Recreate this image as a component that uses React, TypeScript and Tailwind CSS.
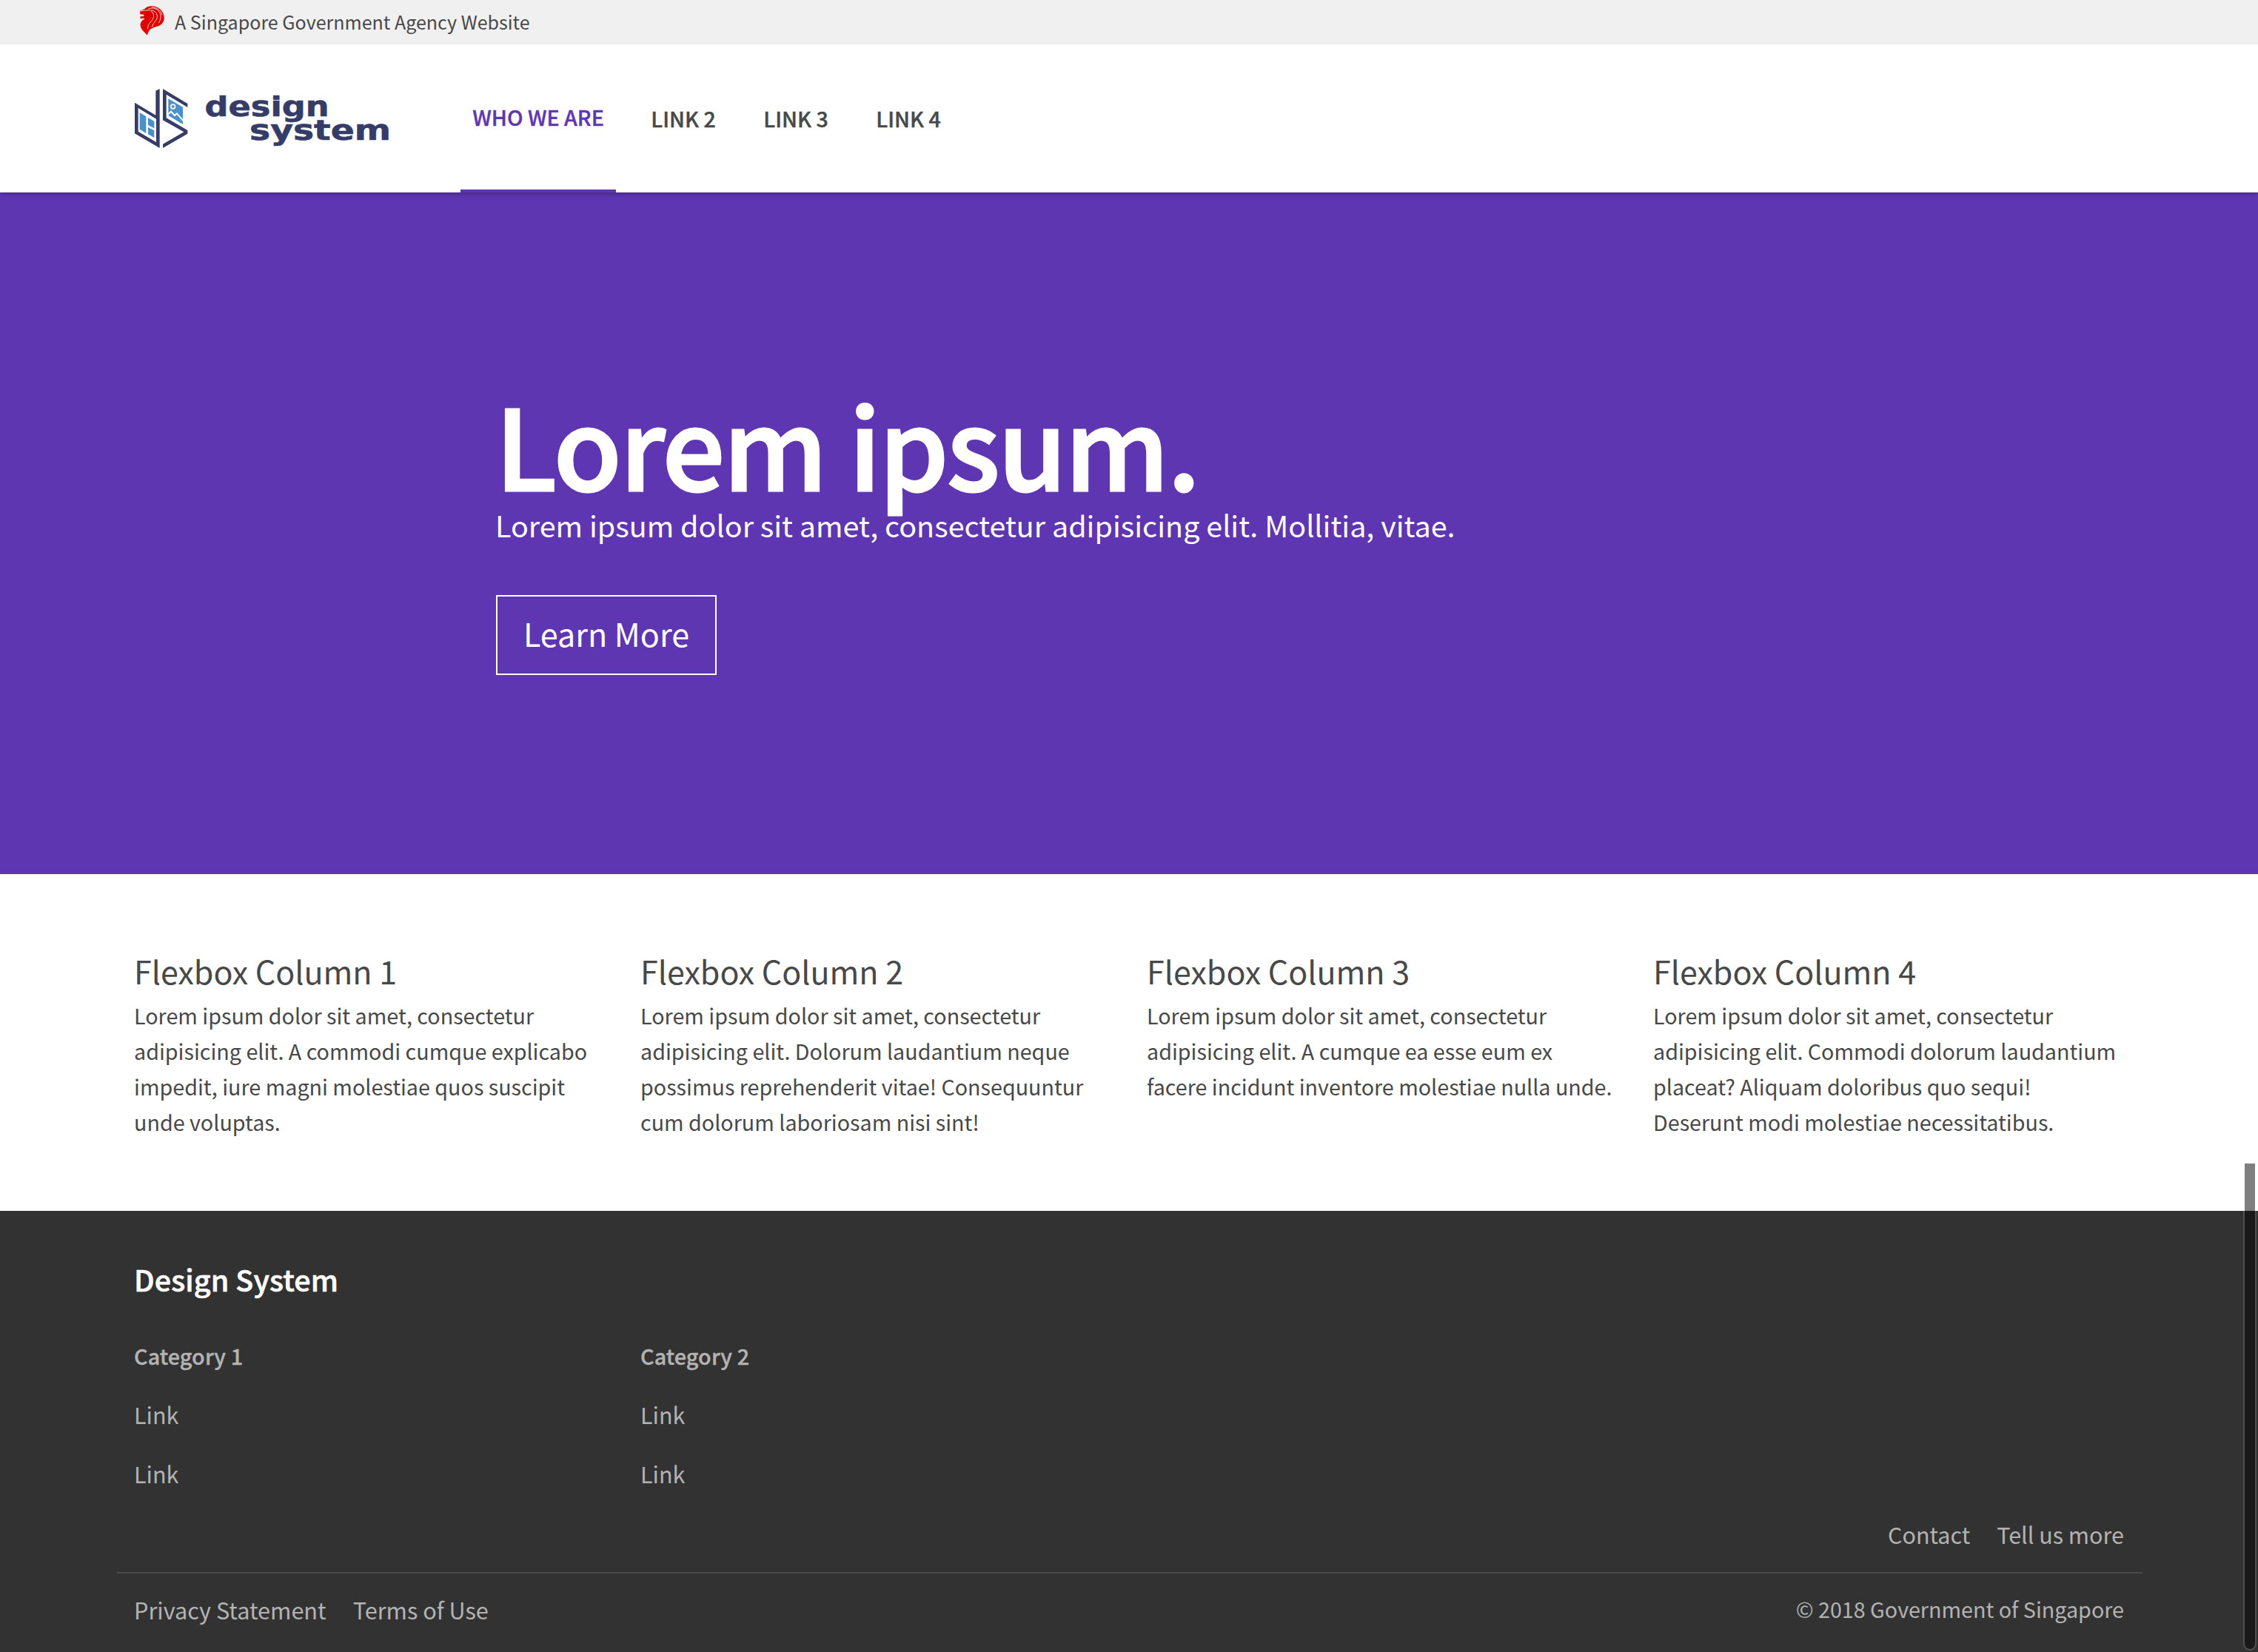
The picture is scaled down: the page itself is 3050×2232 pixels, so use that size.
const navLinks = ["LINK 2", "LINK 3", "LINK 4"];

const columns = [
  {
    title: "Flexbox Column 1",
    body: "Lorem ipsum dolor sit amet, consectetur adipisicing elit. A commodi cumque explicabo impedit, iure magni molestiae quos suscipit unde voluptas.",
  },
  {
    title: "Flexbox Column 2",
    body: "Lorem ipsum dolor sit amet, consectetur adipisicing elit. Dolorum laudantium neque possimus reprehenderit vitae! Consequuntur cum dolorum laboriosam nisi sint!",
  },
  {
    title: "Flexbox Column 3",
    body: "Lorem ipsum dolor sit amet, consectetur adipisicing elit. A cumque ea esse eum ex facere incidunt inventore molestiae nulla unde.",
  },
  {
    title: "Flexbox Column 4",
    body: "Lorem ipsum dolor sit amet, consectetur adipisicing elit. Commodi dolorum laudantium placeat? Aliquam doloribus quo sequi! Deserunt modi molestiae necessitatibus.",
  },
];

const categories = [
  { title: "Category 1", links: ["Link", "Link"] },
  { title: "Category 2", links: ["Link", "Link"] },
];

function LionIcon() {
  return (
    <svg width="60" height="60" viewBox="0 0 180 180" aria-hidden="true">
      <path
        fill="#e00000"
        d="M27 44 L45 37 C52 28 66 23 80 25 C102 27 119 42 124 62 C128 80 121 94 109 102 C98 109 78 110 68 120 C62 127 59 134 56 143 C50 131 32 124 29 104 C28 90 36 82 47 76 L43 74 L29 75 L28 67 L42 66 L44 59 L28 58 Z"
      />
      <g fill="none" stroke="#f0f0f0" strokeWidth="2.6" strokeLinecap="round">
        <path d="M30 45 C42 42 58 41 68 41" />
        <path d="M62 36 C74 30 92 32 102 44 C116 60 112 78 104 92" />
        <path d="M72 42 C88 42 98 54 97 70 C95 84 82 90 76 108" />
        <path d="M72 44 C82 52 86 64 80 76 C74 88 58 96 58 116" />
        <path d="M76 30 C94 28 112 42 117 60" />
      </g>
    </svg>
  );
}

function Logo() {
  return (
    <svg width="350" height="88" viewBox="180 116 350 88" aria-label="design system">
      <g transform="translate(170 110) scale(0.33333)">
        <path
          fill="#363c68"
          fillRule="evenodd"
          d="M36 86 L121 137 L121 38 L137 30 L137 270 L36 211 Z M50 108 L50 203 L123 246 L123 152 Z"
        />
        <path
          fill="#363c68"
          d="M150 30 L250 90 L250 105 L164 53 L164 148 L250 198 L250 212 L150 270 L150 254 L235 205 L150 157 Z"
        />
        <g fill="#4a90c9">
          <path d="M56 126 L82 142 L82 210 L56 194 Z" />
          <path d="M90 147 L115 162 L115 190 L90 177 Z" />
          <path d="M90 186 L115 199 L115 228 L90 214 Z" />
          <path d="M172 70 L231 104 L231 174 L172 138 Z" />
        </g>
        <circle cx="191" cy="102" r="8.5" fill="none" stroke="#fff" strokeWidth="5" />
        <path d="M170 134 L183 122 L198 138 L207 130 L233 160" fill="none" stroke="#fff" strokeWidth="6" />
      </g>
      <g
        fill="#363c68"
        stroke="#363c68"
        strokeWidth="0.6"
        fontFamily="'DejaVu Sans', sans-serif"
        fontWeight="700"
        fontSize="37.5"
      >
        <text x="276.5" y="156.5" textLength="168" lengthAdjust="spacingAndGlyphs">
          design
        </text>
        <text x="337" y="189.2" textLength="191" lengthAdjust="spacingAndGlyphs">
          system
        </text>
      </g>
    </svg>
  );
}

export default function App() {
  return (
    <div className="relative h-[2232px] w-[3050px] overflow-hidden bg-white font-['Noto_Sans_CJK_SC',sans-serif] text-[28.75px] leading-[48px] text-[#484848]">
      <div className="flex h-[60px] items-center bg-[#f0f0f0] pl-[180px] text-[25.05px]">
        <LionIcon />
        <span className="-ml-1 pb-[2px] whitespace-nowrap">A Singapore Government Agency Website</span>
      </div>

      <header className="relative z-10 flex h-[200px] items-center bg-white pl-[180px] shadow-[0_0_8px_rgba(0,0,0,0.45)] [clip-path:inset(0_0_-12px_0)]">
        <Logo />
        <nav className="ml-[92px] flex h-full gap-8 text-[28.6px] font-medium [-webkit-text-stroke:0.4px]">
          <a className="flex w-[210px] items-center justify-center border-b-4 border-[#5f36b1] pb-[1px] text-[#5f36b1]">
            WHO WE ARE
          </a>
          {navLinks.map((label) => (
            <a key={label} className="flex w-[120px] items-center justify-center pr-[2px]">
              {label}
            </a>
          ))}
        </nav>
      </header>

      <section className="h-[921px] bg-[#5f36b1] pt-[262px] pl-[669px] text-white">
        <h1 className="h-[152px] text-[149px] leading-[152px] font-medium tracking-[-2.1px] [-webkit-text-stroke:3px]">
          Lorem ipsum.
        </h1>
        <p className="mt-[5px] text-[39.47px] leading-[60px]">
          Lorem ipsum dolor sit amet, consectetur adipisicing elit. Mollitia, vitae.
        </p>
        <a className="mt-[65px] ml-[1px] flex h-[108px] w-[298px] items-center justify-center border-2 border-white pb-[6px] text-[43.1px]">
          Learn More
        </a>
      </section>

      <section className="flex h-[455px] pt-[100px] pl-[181px]">
        {columns.map((c) => (
          <div key={c.title} className="w-[684px] pr-[50px]">
            <h2 className="text-[43px] leading-[60px]">{c.title}</h2>
            <p className="mt-[7px] text-[28.7px]">{c.body}</p>
          </div>
        ))}
      </section>

      <footer className="h-[596px] bg-[#323232] pt-[62px] pl-[158px] text-[#b3b3b3]">
        <div className="w-[2736px]">
          <div className="pl-[23px]">
            <h2 className="text-[39.5px] leading-[60px] font-medium tracking-[0.1px] text-white [-webkit-text-stroke:0.6px]">
              Design System
            </h2>
            <div className="mt-[50px] flex">
              {categories.map((c) => (
                <div key={c.title} className="w-[684px]">
                  <h3 className="font-medium tracking-[0.1px] [-webkit-text-stroke:0.4px]">{c.title}</h3>
                  <ul className="mt-[31px] flex flex-col gap-8 text-[30.5px]">
                    {c.links.map((l, i) => (
                      <li key={i}>{l}</li>
                    ))}
                  </ul>
                </div>
              ))}
            </div>
          </div>
          <div className="mt-[34px] flex justify-end gap-9 pr-[25px] text-[30.5px]">
            <a>Contact</a>
            <a>Tell us more</a>
          </div>
          <div className="mt-[27px] flex items-start justify-between border-t-2 border-[#4a4a4a] pt-6 pr-[25px] pl-[23px]">
            <div className="mt-[1px] flex gap-9 text-[30.65px]">
              <a>Privacy Statement</a>
              <a>Terms of Use</a>
            </div>
            <p className="text-[28.7px]">© 2018 Government of Singapore</p>
          </div>
        </div>
      </footer>

      <div className="absolute top-[1570px] right-[2px] z-20 h-[660px] w-[18px] rounded-b-full border-2 border-white/15 bg-black/50 bg-clip-padding" />
    </div>
  );
}
